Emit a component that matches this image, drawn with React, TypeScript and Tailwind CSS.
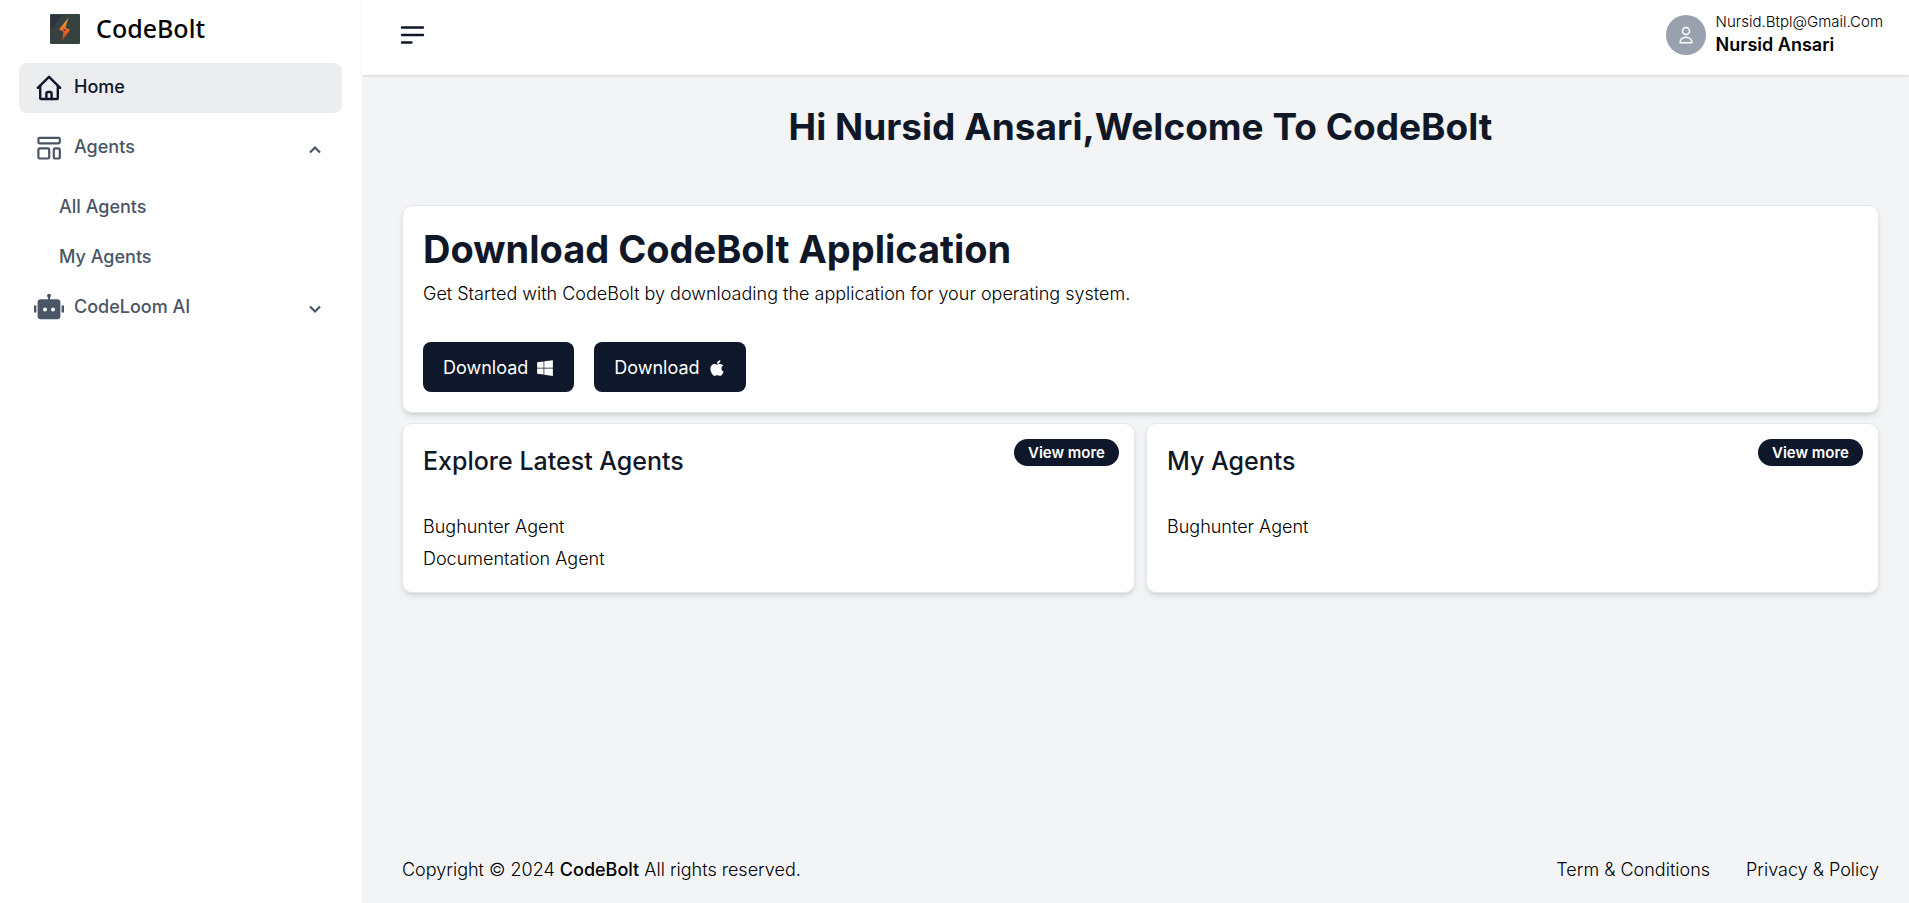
import React from "react";
import { FaApple, FaWindows } from "react-icons/fa";

function LogoMark() {
  return (
    <svg className="h-[30px] w-[30px]" viewBox="0 0 30 30" aria-hidden="true">
      <defs>
        <linearGradient id="bolt" x1="0" y1="0" x2="0" y2="1">
          <stop offset="0" stopColor="#e2a233" />
          <stop offset="0.5" stopColor="#f0702a" />
          <stop offset="1" stopColor="#b23a20" />
        </linearGradient>
      </defs>
      <rect width="30" height="30" rx="1" fill="#36423f" />
      <path d="M1 1h11L3 14H1z" fill="#2d3440" />
      <path d="M18.5 3.5 9 15.5l4.500 2-1.500 9.500 8-11-4.500-2.500z" fill="url(#bolt)" />
      <path d="m13 14.500 3.500 1.500-2.500 1z" fill="#6b2a18" />
    </svg>
  );
}

function HomeIcon() {
  return (
    <svg className="h-[30px] w-[30px]" viewBox="0 0 30 30" fill="none" stroke="currentColor" strokeWidth="2.4" strokeLinecap="round" strokeLinejoin="round" aria-hidden="true">
      <path d="M3.8 14.8 15 3.8l11.2 11" />
      <path d="M6.2 13v12.2q0 .8.8.8h16q.8 0 .8-.8V13" />
      <path d="M12.4 26v-5.400q0-1.600 1.600-1.600h2q1.600 0 1.600 1.600V26" />
    </svg>
  );
}

function AgentsIcon() {
  return (
    <svg className="h-[30px] w-[30px]" viewBox="0 0 30 30" fill="none" stroke="currentColor" strokeWidth="2.2" aria-hidden="true">
      <rect x="4.4" y="4.9" width="21.4" height="5.4" rx="1.2" />
      <rect x="4.4" y="15.3" width="10.8" height="10.2" rx="1.2" />
      <rect x="19.8" y="15.3" width="6" height="10.2" rx="1.6" />
    </svg>
  );
}

function RobotIcon() {
  return (
    <svg className="h-[30px] w-[30px]" viewBox="0 0 30 30" fill="currentColor" aria-hidden="true">
      <path d="M0 13.5h2.4v7H0zM27.6 13.5H30v7h-2.4z" />
      <path d="M14 4h2v5h-2z" />
      <circle cx="15" cy="3.8" r="2" />
      <path fillRule="evenodd" d="M6.6 7.3h16.8a3 3 0 0 1 3 3v13.9a3 3 0 0 1-3 3H6.6a3 3 0 0 1-3-3V10.300a3 3 0 0 1 3-3zM11 15.500a2 2 0 1 0 0 4 2 2 0 0 0 0-4zm8 0a2 2 0 1 0 0 4 2 2 0 0 0 0-4z" />
    </svg>
  );
}

function Chevron({ up = false }: { up?: boolean }) {
  return (
    <svg className="mt-1 h-4 w-4" viewBox="0 0 16 16" fill="none" stroke="currentColor" strokeWidth="2.2" aria-hidden="true">
      <path d={up ? "M3 10.500 8 5.500l5 5" : "M3 5.500l5 5 5-5"} />
    </svg>
  );
}

function UserIcon() {
  return (
    <svg className="h-5 w-5" viewBox="0 0 20 20" fill="none" stroke="currentColor" strokeWidth="1.5" strokeLinejoin="round" aria-hidden="true">
      <circle cx="10" cy="6" r="3.500" />
      <path d="M4 17.700c0-3.200 2.600-5.500 6-5.500s6 2.300 6 5.500z" />
    </svg>
  );
}

const row = "flex h-[50px] w-full items-center rounded-lg pr-[19px] text-left font-medium text-gray-600";

function Sidebar() {
  return (
    <aside className="w-[362px] shrink-0 bg-white pr-5 pl-[19px]">
      <a href="#" className="flex h-[63px] items-start gap-4 pt-[14px] pl-[31px] text-black">
        <LogoMark />
        <span className="font-['Noto_Sans','Open_Sans',sans-serif] text-[25px] leading-7 font-medium">CodeBolt</span>
      </a>
      <nav className="flex flex-col">
        <a href="#" className={`${row} mb-[10px] gap-[10px] bg-[#ecedef] pl-[15px] text-slate-900!`}>
          <HomeIcon />
          <span className="pb-0.5">Home</span>
        </a>
        <button type="button" aria-expanded="true" className={`${row} mb-[9px] gap-[10px] pl-[15px]`}>
          <AgentsIcon />
          <span className="grow pb-0.5">Agents</span>
          <Chevron up />
        </button>
        <a href="#" className={`${row} pl-10`}>All Agents</a>
        <a href="#" className={`${row} pl-10`}>My Agents</a>
        <button type="button" aria-expanded="false" className={`${row} gap-[10px] pl-[15px]`}>
          <RobotIcon />
          <span className="grow">CodeLoom AI</span>
          <Chevron />
        </button>
      </nav>
    </aside>
  );
}

function Header() {
  return (
    <header className="flex h-[75px] items-start justify-between bg-white pr-[26px] pl-[38px] shadow">
      <button type="button" aria-label="Toggle menu" className="mt-[21px]">
        <svg className="h-7 w-7" viewBox="0 0 28 28" fill="none" stroke="#0f172a" strokeWidth="2.400" strokeLinecap="round" aria-hidden="true">
          <path d="M2 6.500h21M2 14h21M2 21.500h9.500" />
        </svg>
      </button>
      <div className="flex gap-[10px] pt-[10px]">
        <span className="mt-[5px] flex h-10 w-10 items-center justify-center rounded-full bg-gray-400 text-white">
          <UserIcon />
        </span>
        <div>
          <p className="text-[15px] leading-[23px] font-light text-black">Nursid.Btpl@Gmail.Com</p>
          <p className="leading-6 font-semibold text-black">Nursid Ansari</p>
        </div>
      </div>
    </header>
  );
}

const card = "rounded-[10px] border border-slate-200 bg-white shadow-md";

function AgentCard({ title, agents }: { title: string; agents: string[] }) {
  return (
    <section className={`${card} relative px-5 pt-5 pb-[17px]`}>
      <h2 className="text-[25px] leading-[34px] font-medium text-gray-900">{title}</h2>
      <a href="#" className="absolute top-[15px] right-[15px] rounded-full bg-slate-900 px-[14px] text-[15px] leading-[27px] font-semibold text-white">
        View more
      </a>
      <ul className="mt-[33px]">
        {agents.map((agent) => (
          <li key={agent} className="leading-8 font-light text-black">{agent}</li>
        ))}
      </ul>
    </section>
  );
}

export default function App() {
  const download = "flex h-[50px] items-center gap-2 rounded-lg bg-slate-900 px-5 pt-0.5 text-white";
  return (
    <div className="flex min-h-screen bg-gray-100 font-['Inter',sans-serif] text-[18px] leading-7 text-gray-900">
      <Sidebar />
      <div className="flex min-w-0 grow flex-col">
        <Header />
        <main className="grow pr-[30px] pl-10">
          <h1 className="pt-7 pb-[54px] text-center text-[37px] leading-[48px] font-bold">
            Hi Nursid Ansari,Welcome To CodeBolt
          </h1>
          <section className={`${card} mb-[10px] p-5`}>
            <h2 className="text-[38px] leading-[46px] font-bold">Download CodeBolt Application</h2>
            <p className="mt-2 font-light text-black">Get Started with CodeBolt by downloading the application for your operating system.</p>
            <div className="mt-[34px] flex gap-5">
              <button type="button" className={download}>
                Download <FaWindows className="h-[18px] w-[18px]" />
              </button>
              <button type="button" className={download}>
                Download <FaApple className="h-[18px] w-[18px]" />
              </button>
            </div>
          </section>
          <div className="grid grid-cols-2 gap-[11px]">
            <AgentCard title="Explore Latest Agents" agents={["Bughunter Agent", "Documentation Agent"]} />
            <AgentCard title="My Agents" agents={["Bughunter Agent"]} />
          </div>
        </main>
        <footer className="flex justify-between pr-[30px] pb-[19px] pl-10 font-light text-black">
          <p>
            Copyright © 2024 <strong className="font-medium">CodeBolt</strong> All rights reserved.
          </p>
          <div className="flex gap-9">
            <a href="#">Term &amp; Conditions</a>
            <a href="#">Privacy &amp; Policy</a>
          </div>
        </footer>
      </div>
    </div>
  );
}
